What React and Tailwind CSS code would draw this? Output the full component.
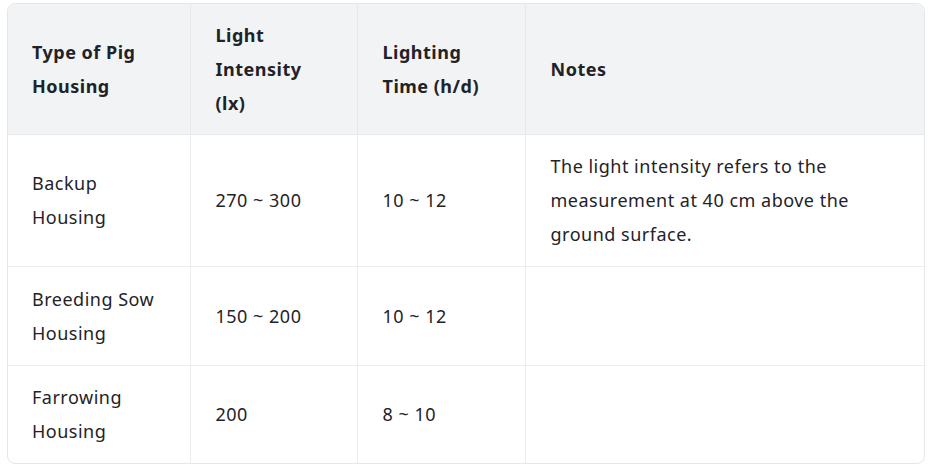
export default function App() {
  const font = { fontFamily: '"Noto Sans", "Open Sans", sans-serif' };
  return (
    <div className="w-[929px] h-[465px] bg-white pl-[7px] pt-[3px]" style={font}>
      <div className="w-[918px] border border-[#e5e7eb] rounded-[8px] overflow-hidden">
        <table className="table-fixed w-full border-collapse text-[18px] tracking-[0.5px] leading-[34px] text-[#1f2328]">
          <colgroup>
            <col className="w-[182px]" />
            <col className="w-[167px]" />
            <col className="w-[168px]" />
            <col className="w-[400px]" />
          </colgroup>
          <thead>
            <tr className="bg-[#f2f3f5] h-[130px]">
              <th className="text-left align-middle font-bold px-[24px] border-r border-b border-[#e8e9eb]">Type of Pig<br />Housing</th>
              <th className="text-left align-middle font-bold px-[25px] border-r border-b border-[#e8e9eb]">Light<br />Intensity<br />(lx)</th>
              <th className="text-left align-middle font-bold px-[25px] border-r border-b border-[#e8e9eb]">Lighting<br />Time (h/d)</th>
              <th className="text-left align-middle font-bold px-[25px] border-b border-[#e8e9eb]">Notes</th>
            </tr>
          </thead>
          <tbody>
            <tr className="h-[132px]">
              <td className="align-middle px-[24px] border-r border-b border-[#ececec]">Backup<br />Housing</td>
              <td className="align-middle px-[25px] border-r border-b border-[#ececec]">270 ~ 300</td>
              <td className="align-middle px-[25px] border-r border-b border-[#ececec]">10 ~ 12</td>
              <td className="align-middle px-[25px] border-b border-[#ececec]">The light intensity refers to the<br />measurement at 40 cm above the<br />ground surface.</td>
            </tr>
            <tr className="h-[99px]">
              <td className="align-middle px-[24px] border-r border-b border-[#ececec]">Breeding Sow<br />Housing</td>
              <td className="align-middle px-[25px] border-r border-b border-[#ececec]">150 ~ 200</td>
              <td className="align-middle px-[25px] border-r border-b border-[#ececec]">10 ~ 12</td>
              <td className="align-middle px-[25px] border-b border-[#ececec]"></td>
            </tr>
            <tr className="h-[98px]">
              <td className="align-middle px-[24px] border-r border-[#ececec]">Farrowing<br />Housing</td>
              <td className="align-middle px-[25px] border-r border-[#ececec]">200</td>
              <td className="align-middle px-[25px] border-r border-[#ececec]">8 ~ 10</td>
              <td className="align-middle px-[25px]"></td>
            </tr>
          </tbody>
        </table>
      </div>
    </div>
  );
}
